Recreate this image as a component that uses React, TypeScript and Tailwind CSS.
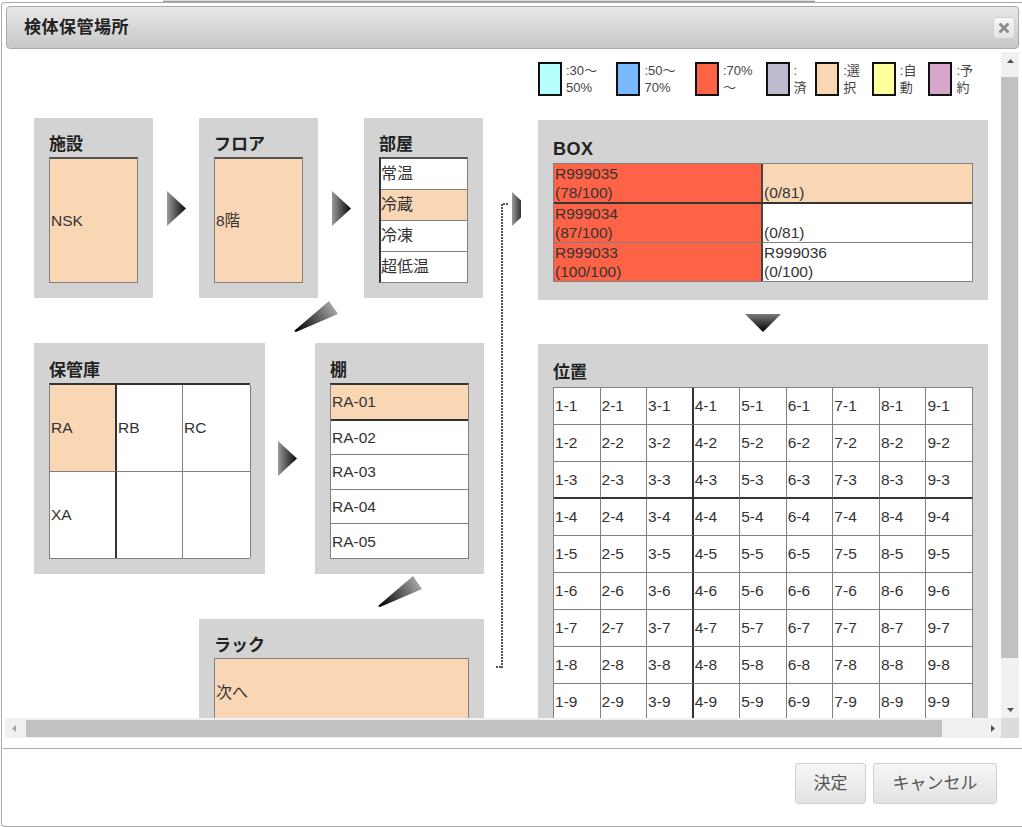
import React from "react";

const FONT = "font-['Liberation_Sans','Noto_Sans_CJK_JP',sans-serif]";

function RightArrow({ id }: { id: string }) {
  return (
    <svg width="19" height="35" viewBox="0 0 19 35">
      <defs>
        <linearGradient id={id} x1="0" y1="0" x2="1" y2="0">
          <stop offset="0" stopColor="#9a9a9a" />
          <stop offset="1" stopColor="#050505" />
        </linearGradient>
      </defs>
      <polygon points="0,0 19,17.5 0,35" fill={`url(#${id})`} />
    </svg>
  );
}

function DiagArrow({ id }: { id: string }) {
  return (
    <svg width="46" height="34" viewBox="0 0 46 34">
      <defs>
        <linearGradient id={id} x1="40" y1="8" x2="2" y2="31" gradientUnits="userSpaceOnUse">
          <stop offset="0" stopColor="#a4a4a4" />
          <stop offset="1" stopColor="#000000" />
        </linearGradient>
      </defs>
      <polygon points="35,1 44,14 2,32 0,31" fill={`url(#${id})`} />
    </svg>
  );
}

function DownArrow() {
  return (
    <svg width="36" height="18" viewBox="0 0 36 18">
      <defs>
        <linearGradient id="dgrad" x1="0" y1="0" x2="0" y2="1">
          <stop offset="0" stopColor="#7a7a7a" />
          <stop offset="1" stopColor="#000000" />
        </linearGradient>
      </defs>
      <polygon points="0,0 36,0 18,18" fill="url(#dgrad)" />
    </svg>
  );
}

const legend = [
  { c: "bg-[#b5ffff]", l1: ":30〜", l2: "50%", w: "w-[79px]" },
  { c: "bg-[#79b9ff]", l1: ":50〜", l2: "70%", w: "w-[79px]" },
  { c: "bg-[#ff6347]", l1: ":70%", l2: "〜", w: "w-[71px]" },
  { c: "bg-[#bcbbd0]", l1: ":", l2: "済", w: "w-[50px]" },
  { c: "bg-[#f9d7b5]", l1: ":選", l2: "択", w: "w-[57px]" },
  { c: "bg-[#ffff9e]", l1: ":自", l2: "動", w: "w-[57px]" },
  { c: "bg-[#d8a6cc]", l1: ":予", l2: "約", w: "w-[60px]" },
];

function LeftTitle({ children }: { children: React.ReactNode }) {
  return <div className="h-[24px] leading-[24px] text-[17px] font-bold text-[#222]">{children}</div>;
}

export default function App() {
  const rooms = ["常温", "冷蔵", "冷凍", "超低温"];
  const shelves = ["RA-01", "RA-02", "RA-03", "RA-04", "RA-05"];
  const rows = [1, 2, 3, 4, 5, 6, 7, 8, 9];
  const cols = [1, 2, 3, 4, 5, 6, 7, 8, 9];

  return (
    <div className={`w-[1022px] h-[827px] bg-white overflow-hidden ${FONT}`}>
      {/* background strip */}
      <div className="h-[2px] flex">
        <div className="ml-[163px] w-[652px] h-[2px] bg-[#dedede] border-b border-[#999]"></div>
      </div>
      {/* dialog */}
      <div className="h-[825px] ml-[1px] border-l border-t border-b border-[#aaa] rounded-l-[4px] flex flex-col">
        {/* title bar */}
        <div className="mt-[3px] ml-[4px] mr-[3px] h-[43px] border border-[#aaa] rounded-[4px] bg-linear-to-b from-[#e8e8e8] to-[#c8c8c8] flex items-center justify-between pl-[17px] pr-[3px]">
          <span className="text-[17px] font-bold text-[#222] tracking-[0.5px]">検体保管場所</span>
          <div className="w-[22px] h-[22px] rounded-[3px] border border-[#d0d0d0] bg-linear-to-b from-[#f6f6f6] to-[#e4e4e4] flex items-center justify-center">
            <svg width="10" height="10" viewBox="0 0 10 10">
              <path d="M1.5 1.5 L8.5 8.5 M8.5 1.5 L1.5 8.5" stroke="#8a8a8a" strokeWidth="2.8" strokeLinecap="square" />
            </svg>
          </div>
        </div>

        {/* content with scrollbars */}
        <div className="mt-[3px] flex h-[686px]">
          <div className="ml-[3px] w-[996px] flex flex-col">
            <div className="h-[666px] overflow-hidden">
              <div className="flex items-start pl-[29px]">
                {/* left column */}
                <div className="w-[450px] pt-[66px] flex flex-col">
                  <div className="flex h-[180px]">
                    <div className="w-[119px] h-[180px] bg-[#d3d3d3] p-[15px]">
                      <LeftTitle>施設</LeftTitle>
                      <div className="h-[126px] bg-[#f9d7b5] border border-[#808080] border-t-2 border-t-[#555] flex items-center pl-[1px] text-[15.5px] text-[#333]">NSK</div>
                    </div>
                    <div className="w-[46px] flex items-center pl-[14px]"><RightArrow id="ra1" /></div>
                    <div className="w-[119px] h-[180px] bg-[#d3d3d3] p-[15px]">
                      <LeftTitle>フロア</LeftTitle>
                      <div className="h-[126px] bg-[#f9d7b5] border border-[#808080] border-t-2 border-t-[#555] flex items-center pl-[1px] text-[15.5px] text-[#333]">8階</div>
                    </div>
                    <div className="w-[46px] flex items-center pl-[14px]"><RightArrow id="ra2" /></div>
                    <div className="w-[119px] h-[180px] bg-[#d3d3d3] p-[15px]">
                      <LeftTitle>部屋</LeftTitle>
                      <div className="h-[126px] bg-white border border-[#808080] border-t-2 border-t-[#555] border-l-2 border-l-[#333] flex flex-col">
                        {rooms.map((r, i) => (
                          <div key={r} className={`flex-1 flex items-center text-[16px] text-[#333] ${i < 3 ? "border-b border-[#808080]" : ""} ${i === 1 ? "bg-[#f9d7b5]" : ""}`}>{r}</div>
                        ))}
                      </div>
                    </div>
                  </div>
                  <div className="h-[45px] pt-[2px] pl-[260px]"><DiagArrow id="da1" /></div>
                  <div className="flex h-[231px]">
                    <div className="w-[231px] h-[231px] bg-[#d3d3d3] p-[15px]">
                      <div className="h-[25px] leading-[25px] text-[17px] font-bold text-[#222]">保管庫</div>
                      <div className="w-[201px] h-[176px] border-l border-b border-[#808080] border-t-2 border-t-[#333] grid grid-cols-[67px_66px_68px] grid-rows-2 text-[15.5px] text-[#333]">
                        <div className="bg-[#f9d7b5] border-r-2 border-r-[#333] border-b border-b-[#808080] flex items-center pl-[1px]">RA</div>
                        <div className="bg-white border-r border-b border-[#808080] flex items-center pl-[1px]">RB</div>
                        <div className="bg-white border-r border-b border-[#808080] flex items-center pl-[1px]">RC</div>
                        <div className="bg-white border-r-2 border-r-[#333] flex items-center pl-[1px]">XA</div>
                        <div className="bg-white border-r border-[#808080]"></div>
                        <div className="bg-white border-r border-[#808080]"></div>
                      </div>
                    </div>
                    <div className="w-[50px] flex items-center pl-[13px]"><RightArrow id="ra3" /></div>
                    <div className="w-[169px] h-[231px] bg-[#d3d3d3] p-[15px]">
                      <div className="h-[25px] leading-[25px] text-[17px] font-bold text-[#222]">棚</div>
                      <div className="h-[176px] bg-white border border-[#808080] border-t-2 border-t-[#333] flex flex-col">
                        {shelves.map((s, i) => (
                          <div key={s} className={`flex-1 flex items-center pl-[1px] text-[15.5px] text-[#333] ${i === 0 ? "bg-[#f9d7b5] border-b-2 border-b-[#333]" : i < 4 ? "border-b border-[#808080]" : ""}`}>{s}</div>
                        ))}
                      </div>
                    </div>
                  </div>
                  <div className="h-[45px] pt-[1px] pl-[344px]"><DiagArrow id="da2" /></div>
                  <div className="ml-[165px] w-[285px] h-[125px] bg-[#d3d3d3] p-[15px]">
                    <LeftTitle>ラック</LeftTitle>
                    <div className="h-[70px] bg-[#f9d7b5] border border-[#808080] flex items-center pl-[1px] text-[16px] text-[#333]">次へ</div>
                  </div>
                </div>

                {/* connector column */}
                <div className="w-[54px]">
                  <svg width="54" height="620" viewBox="0 0 54 620">
                    <defs>
                      <linearGradient id="ra4" x1="0" y1="0" x2="1" y2="0">
                        <stop offset="0" stopColor="#9a9a9a" />
                        <stop offset="1" stopColor="#333" />
                      </linearGradient>
                    </defs>
                    <line x1="18" y1="152" x2="18" y2="616" stroke="#555" strokeWidth="2" strokeDasharray="2 1" />
                    <line x1="19" y1="152" x2="25" y2="152" stroke="#555" strokeWidth="2" strokeDasharray="2 1" />
                    <line x1="12" y1="615" x2="18" y2="615" stroke="#555" strokeWidth="2" strokeDasharray="2 1" />
                    <polygon points="28,140 37,148.5 37,165.5 28,174" fill="url(#ra4)" />
                  </svg>
                </div>

                {/* right column */}
                <div className="w-[450px] pt-[10px] flex flex-col">
                  <div className="flex h-[34px]">
                    {legend.map((it, i) => (
                      <div key={i} className={`flex ${it.w}`}>
                        <div className={`w-[24px] h-[34px] border-2 border-[#111] ${it.c}`}></div>
                        <div className="ml-[4px] text-[13px] leading-[17px] text-[#444] whitespace-nowrap">
                          <div>{it.l1}</div>
                          <div>{it.l2}</div>
                        </div>
                      </div>
                    ))}
                  </div>
                  <div className="mt-[24px] h-[180px] bg-[#d3d3d3] px-[15px] pt-[15px] pb-[18px]">
                    <div className="h-[28px] leading-[28px] text-[18px] font-bold text-[#222] tracking-[0.5px]">BOX</div>
                    <div className="w-[420px] h-[119px] border border-[#808080] grid grid-cols-2 grid-rows-[40px_39px_38px] text-[15.5px] leading-[19px] text-[#333]">
                      <div className="bg-[#ff6347] border-r-2 border-r-[#444] border-b-2 border-b-[#333] pl-[1px]"><div>R999035</div><div>(78/100)</div></div>
                      <div className="bg-[#f9d7b5] border-b-2 border-b-[#333] pl-[1px]"><div>&nbsp;</div><div>(0/81)</div></div>
                      <div className="bg-[#ff6347] border-r-2 border-r-[#444] border-b border-b-[#808080] pl-[1px]"><div>R999034</div><div>(87/100)</div></div>
                      <div className="bg-white border-b border-b-[#808080] pl-[1px]"><div>&nbsp;</div><div>(0/81)</div></div>
                      <div className="bg-[#ff6347] border-r-2 border-r-[#444] pl-[1px]"><div>R999033</div><div>(100/100)</div></div>
                      <div className="bg-white pl-[1px]"><div>R999036</div><div>(0/100)</div></div>
                    </div>
                  </div>
                  <div className="h-[44px] pt-[14px] pl-[207px]"><DownArrow /></div>
                  <div className="bg-[#d3d3d3] px-[15px] pt-[15px] pb-[15px]">
                    <div className="h-[28px] leading-[28px] text-[17px] font-bold text-[#222]">位置</div>
                    <div className="w-[420px] border-l border-t border-[#808080] grid grid-cols-9 bg-white text-[15.5px] text-[#333]">
                      {rows.map((r) =>
                        cols.map((c) => (
                          <div
                            key={`${c}-${r}`}
                            className={`h-[37px] flex items-center pl-[1px] ${c === 3 ? "border-r-2 border-r-[#333]" : "border-r border-r-[#808080]"} ${r === 3 ? "border-b-2 border-b-[#333]" : "border-b border-b-[#808080]"}`}
                          >
                            {c}-{r}
                          </div>
                        ))
                      )}
                    </div>
                  </div>
                </div>
                <div className="w-[20px] shrink-0"></div>
              </div>
            </div>
            {/* horizontal scrollbar */}
            <div className="h-[20px] bg-[#f1f1f1] flex items-center">
              <div className="w-[17px] h-[17px] flex items-center justify-center">
                <svg width="4" height="7" viewBox="0 0 4 7"><polygon points="4,0 0,3.5 4,7" fill="#a3a3a3" /></svg>
              </div>
              <div className="w-[4px]"></div>
              <div className="w-[916px] h-[17px] bg-[#c1c1c1]"></div>
              <div className="flex-1"></div>
              <div className="w-[17px] h-[17px] flex items-center justify-center">
                <svg width="4" height="7" viewBox="0 0 4 7"><polygon points="0,0 4,3.5 0,7" fill="#505050" /></svg>
              </div>
            </div>
          </div>
          {/* vertical scrollbar */}
          <div className="w-[18px] flex flex-col">
            <div className="h-[666px] bg-[#f1f1f1] flex flex-col">
              <div className="h-[17px] flex items-center justify-center">
                <svg width="7" height="4" viewBox="0 0 7 4"><polygon points="0,4 3.5,0 7,4" fill="#505050" /></svg>
              </div>
              <div className="h-[8px]"></div>
              <div className="h-[581px] w-[17px] bg-[#c1c1c1]"></div>
              <div className="flex-1"></div>
              <div className="h-[17px] flex items-center justify-center">
                <svg width="7" height="4" viewBox="0 0 7 4"><polygon points="0,0 7,0 3.5,4" fill="#505050" /></svg>
              </div>
            </div>
            <div className="h-[20px] bg-[#dcdcdc]"></div>
          </div>
        </div>

        {/* separator */}
        <div className="mt-[10px] ml-[1px] h-px bg-[#aaa]"></div>

        {/* footer */}
        <div className="flex justify-end pt-[14px] pr-[25px] gap-[7px]">
          <div className="w-[71px] h-[41px] rounded-[3px] border border-[#d0d0d0] bg-linear-to-b from-[#f6f6f6] to-[#e3e3e3] flex items-center justify-center text-[17px] text-[#555]">決定</div>
          <div className="w-[124px] h-[41px] rounded-[3px] border border-[#d0d0d0] bg-linear-to-b from-[#f6f6f6] to-[#e3e3e3] flex items-center justify-center text-[17px] text-[#555]">キャンセル</div>
        </div>
      </div>
    </div>
  );
}
